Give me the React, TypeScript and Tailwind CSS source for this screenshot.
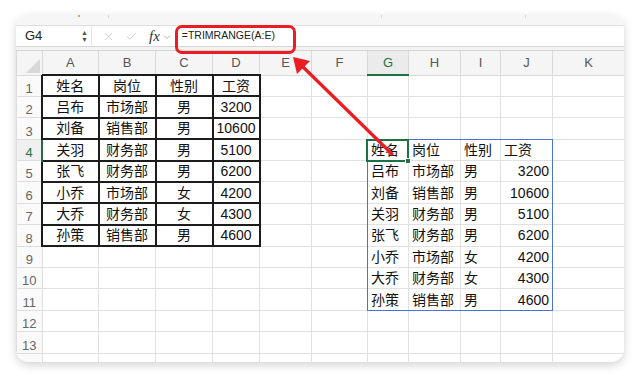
import React from 'react';
import { X, Check } from 'lucide-react';

const cols = ['A', 'B', 'C', 'D', 'E', 'F', 'G', 'H', 'I', 'J', 'K'];
const widths = [25.5, 56.5, 57, 57, 47, 52, 56, 41, 52, 40, 52, 72];

const data = [
  ['姓名', '岗位', '性别', '工资'],
  ['吕布', '市场部', '男', '3200'],
  ['刘备', '销售部', '男', '10600'],
  ['关羽', '财务部', '男', '5100'],
  ['张飞', '财务部', '男', '6200'],
  ['小乔', '市场部', '女', '4200'],
  ['大乔', '财务部', '女', '4300'],
  ['孙策', '销售部', '男', '4600'],
];

const rows = Array.from({ length: 14 }, (_, i) => i + 1);

const Cell = ({ r, c }: { r: number; c: number }) => {
  // left table A1:D8
  if (r <= 8 && c <= 3) {
    return (
      <td className="border-2 border-[#1c1c1c] px-[3px] text-center">
        {data[r - 1][c]}
      </td>
    );
  }
  // trimmed result G4:J11
  if (r >= 4 && r <= 11 && c >= 6 && c <= 9) {
    const v = data[r - 4][c - 6];
    const right = c === 9 && r > 4;
    return (
      <td className={`border border-[#e1e1e1] px-[3px] ${right ? 'text-right' : 'text-left'}`}>
        {v}
      </td>
    );
  }
  return <td className="border border-[#e1e1e1]" />;
};

const App = () => {
  return (
    <div
      className="relative w-[640px] h-[379px] bg-white pl-[16px] pt-[15px]"
      style={{ fontFamily: '"Liberation Sans", "Noto Sans CJK SC", sans-serif' }}
    >
      <div className="w-[608px] h-[347px] rounded-[13px] overflow-hidden bg-white shadow-[0_3px_10px_rgba(0,0,0,0.18)]">
        {/* top strip */}
        <div className="relative h-[11px] bg-[#f6f6f6] border-b border-[#dedede]">
          <div className="absolute left-[62px] top-0 w-[2px] h-[2px] bg-[#f0a050]" />
          <div className="absolute left-[92px] top-0 w-px h-[3px] bg-[#d6d6d6]" />
          <div className="absolute left-[365px] top-0 w-px h-[3px] bg-[#d6d6d6]" />
          <div className="absolute left-[509px] top-0 w-px h-[3px] bg-[#d6d6d6]" />
        </div>

        {/* formula bar */}
        <div className="flex h-[21px] items-center bg-white border-b border-[#d6d6d6]">
          <div className="flex h-full w-[76px] items-center justify-between border-r border-[#e6e6e6] pl-[9px] pr-[3px]">
            <span className="text-[13px] text-[#222]">G4</span>
            <div className="flex flex-col items-center text-[#555] leading-none">
              <span className="text-[7px]">▲</span>
              <span className="text-[7px]">▼</span>
            </div>
          </div>
          <div className="flex items-center gap-[10px] pl-[10px]">
            <X size={13} strokeWidth={1.5} className="text-[#c4c4c4]" />
            <Check size={13} strokeWidth={1.5} className="text-[#c4c4c4]" />
          </div>
          <span
            className="ml-[11px] text-[15px] italic text-[#333] leading-none"
            style={{ fontFamily: '"Liberation Serif", serif' }}
          >
            fx
          </span>
          <svg width="8" height="6" viewBox="0 0 8 6" className="ml-[3px] mt-[2px]">
            <path d="M1 1.5 L4 4.5 L7 1.5" fill="none" stroke="#b0b0b0" strokeWidth="1" />
          </svg>
          <span className="ml-[11px] text-[10.5px] text-[#222]">=TRIMRANGE(A:E)</span>
        </div>
        <div className="h-[4px] bg-[#f3f3f3] border-b border-[#d4d4d4]" />

        {/* sheet */}
        <table
          className="table-fixed border-collapse text-[14px] text-[#111] leading-none"
          style={{ width: 608 }}
        >
          <colgroup>
            {widths.map((w, i) => (
              <col key={i} style={{ width: w }} />
            ))}
          </colgroup>
          <thead>
            <tr className="h-[24px]">
              <th className="relative border border-t-0 border-[#d9d9d9] bg-[#f5f5f5]">
                <svg width="14" height="14" className="absolute right-[2px] bottom-[2px]">
                  <polygon points="14,0 14,14 0,14" fill="#d8d8d8" />
                </svg>
              </th>
              {cols.map((c) => (
                <th
                  key={c}
                  className={
                    c === 'G'
                      ? 'border border-t-0 border-[#d9d9d9] border-b-2 border-b-[#1e7145] bg-[#ebebeb] text-[13px] font-normal text-[#1e7145]'
                      : 'border border-t-0 border-[#d9d9d9] bg-[#f5f5f5] text-[13px] font-normal text-[#555]'
                  }
                >
                  {c}
                </th>
              ))}
            </tr>
          </thead>
          <tbody>
            {rows.map((r) => (
              <tr key={r} className="h-[21.4px]">
                <td
                  className={
                    r === 4
                      ? 'border border-[#dedede] border-r-2 border-r-[#1e7145] bg-[#f0f0f0] text-center align-bottom pb-[1px] text-[13px] text-[#1e7145]'
                      : 'border border-[#dedede] bg-[#fafafa] text-center align-bottom pb-[1px] text-[13px] text-[#666]'
                  }
                >
                  {r}
                </td>
                {cols.map((_, c) => (
                  <Cell key={c} r={r} c={c} />
                ))}
              </tr>
            ))}
          </tbody>
        </table>
      </div>

      {/* result range outline */}
      <div className="absolute left-[367px] top-[139px] w-[186px] h-[172px] border border-[#4a73d1] pointer-events-none" />
      {/* active cell */}
      <div className="absolute left-[366px] top-[139px] w-[43px] h-[23px] border-2 border-[#1e7145] pointer-events-none" />
      <div className="absolute left-[405px] top-[158px] w-[6px] h-[6px] bg-[#1e7145] border border-white pointer-events-none" />

      {/* callout */}
      <div className="absolute left-[175px] top-[25px] w-[121px] h-[29px] rounded-[7px] border-[3px] border-[#ec1c24] pointer-events-none" />
      <svg className="absolute left-0 top-0 pointer-events-none" width="640" height="379">
        <line x1="301" y1="65" x2="392" y2="154" stroke="#ec1c24" strokeWidth="3.2" strokeLinecap="round" />
        <polygon points="293,57 310,61 297,74" fill="#ec1c24" />
      </svg>
    </div>
  );
};

export default App;
